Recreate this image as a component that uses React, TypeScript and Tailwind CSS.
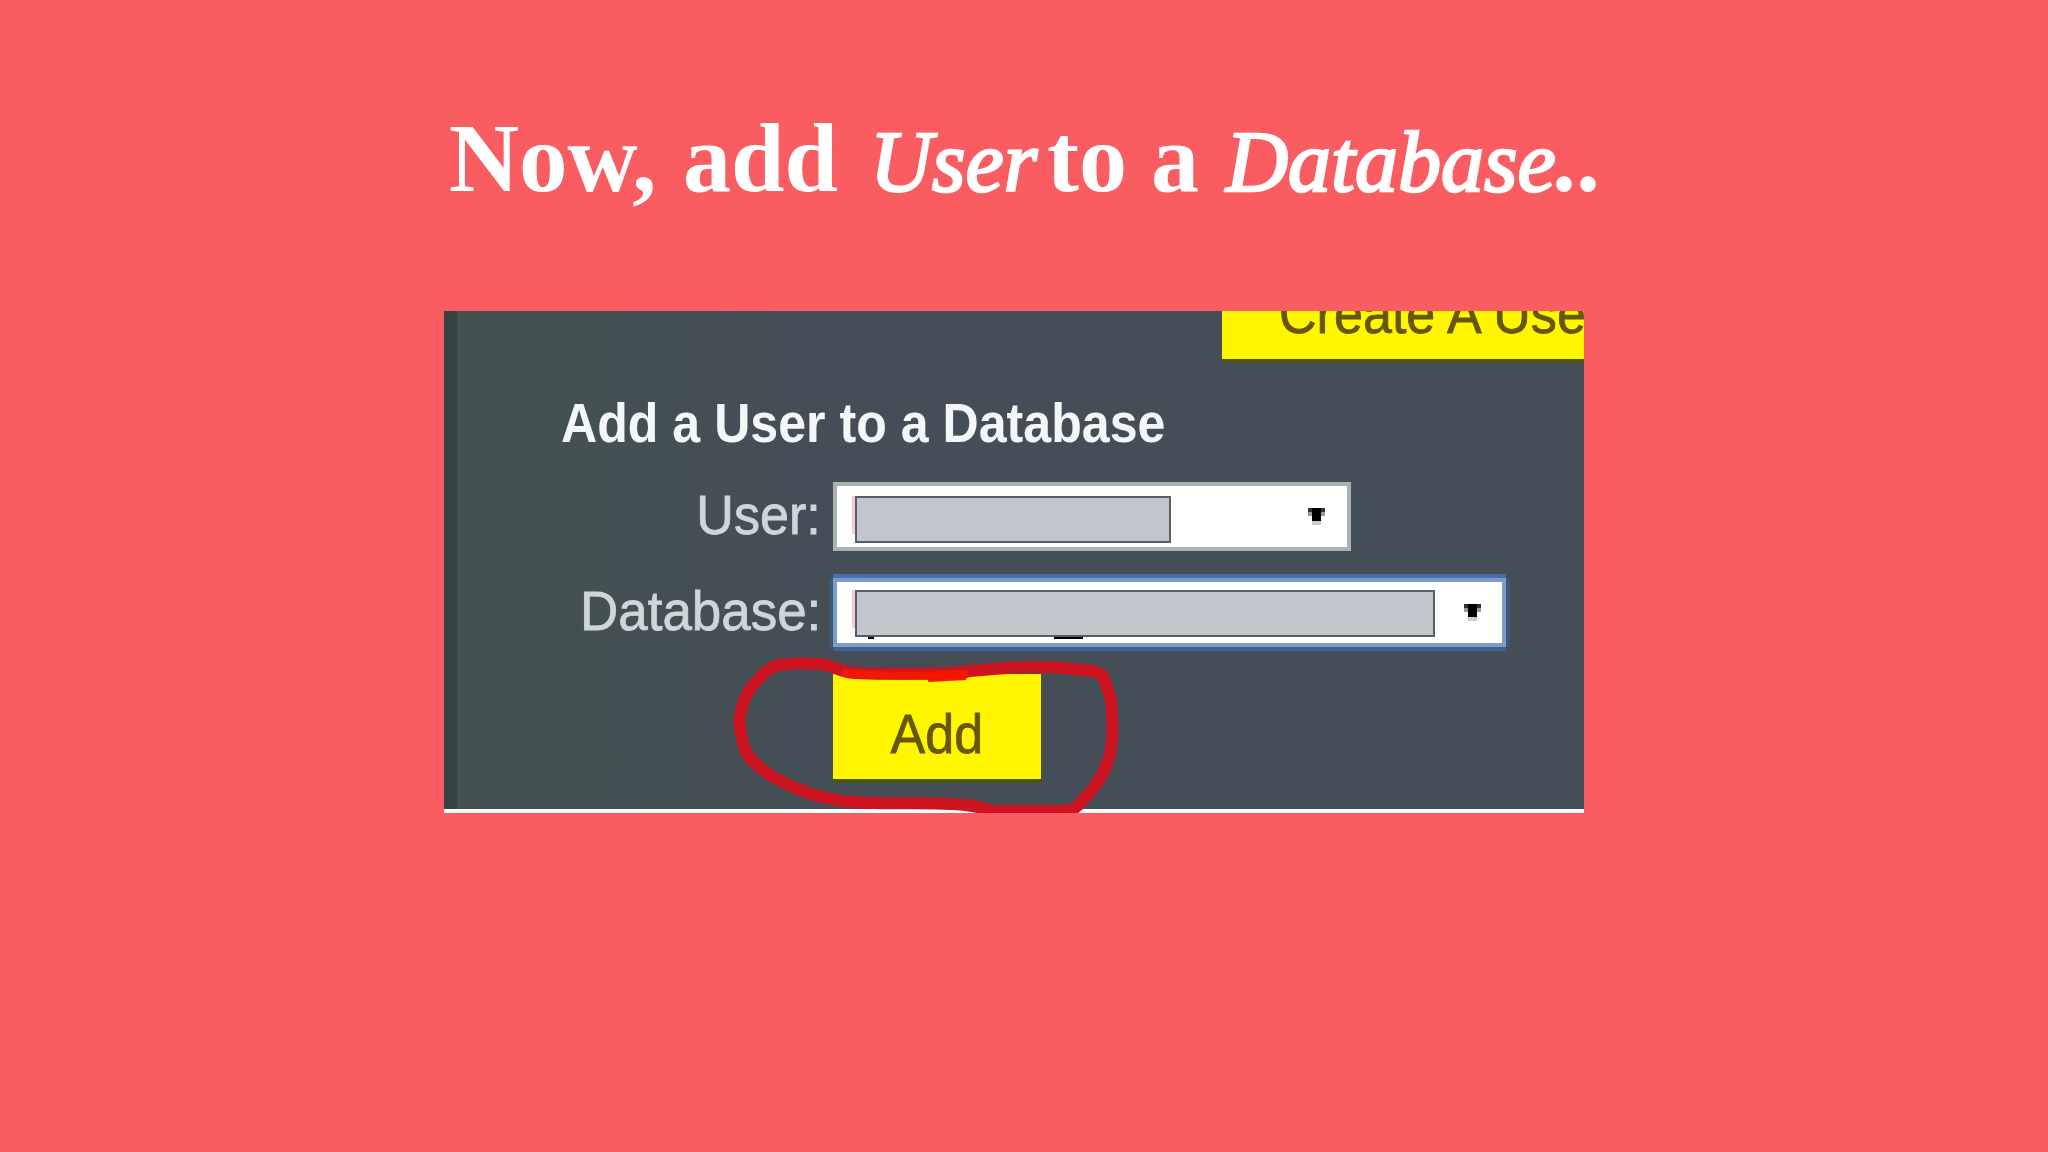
import clsx from 'clsx';

interface FieldProps {
  label: string;
  labelScale: string;
  boxClass: string;
  valueClass: string;
  arrowClass: string;
  focused?: boolean;
}

function SelectArrow({ className }: { className: string }) {
  return (
    <svg viewBox="0 0 17 17" className={clsx('h-[17px] w-[17px] shrink-0', className)} shapeRendering="crispEdges">
      <path d="M0 0h17v4H0z" fill="#333" />
      <path d="M4 0h9v13H4z" fill="#000" />
      <path d="M0 4h4v4H0zM13 4h4v4h-4z" fill="#999" />
      <path d="M4 13h9v4H4z" fill="#ccc" />
    </svg>
  );
}

function Field({ label, labelScale, boxClass, valueClass, arrowClass, focused }: FieldProps) {
  return (
    <div className="flex">
      <div className="flex w-[389px] justify-end pr-[12px] pt-[5px]">
        <span
          className={clsx(
            'origin-right whitespace-nowrap text-[56px] leading-none text-[#cfd5d8] [-webkit-text-stroke:0.8px_#cfd5d8]',
            labelScale,
          )}
        >
          {label}
        </span>
      </div>
      <div
        className={clsx(
          'flex border-4 bg-white',
          focused
            ? 'border-[#7c9cc9] shadow-[0_-4px_0_#4a6ea6,0_4px_0_#41628f,4px_0_0_#3f5873,-4px_0_0_#3f5873]'
            : 'border-[#a9b1b1]',
          boxClass,
        )}
      >
        <div className={clsx('relative ml-[18px] border-2 border-[#565f62] bg-[#c0c6cb]', valueClass)}>
          <span className="absolute -left-[5px] -top-[2px] h-[38px] w-[3px] bg-[#ffc4d8]" />
          {focused && (
            <>
              <span className="absolute left-[11px] top-full mt-[2px] h-[2px] w-[6px] bg-black" />
              <span className="absolute left-[197px] top-full mt-[2px] h-[2px] w-[29px] bg-black" />
            </>
          )}
        </div>
        <SelectArrow className={arrowClass} />
      </div>
    </div>
  );
}

// Hand drawn marker around the Add button
function MarkerCircle() {
  return (
    <svg viewBox="444 311 1140 502" className="absolute inset-0 h-[502px] w-[1140px]" fill="none">
      <path
        d="M778 665C795 663 815 663 827 665C836 668 842 672 855 673C880 674 920 674 950 673C980 670 1010 667 1037 667C1055 667 1070 668 1082 670C1094 671 1102 672 1104 679C1109 692 1112 700 1112 714C1113 730 1113 745 1109 757C1105 773 1095 788 1083 800C1077 808 1072 811 1063 811L995 811C980 807 965 804 950 804C925 802 870 805 843 801C825 798 814 796 803 791C790 786 778 781 767 773C756 765 748 758 745 749C740 735 738 722 741 710C744 698 748 690 756 682C762 674 768 668 778 665Z"
        stroke="#cc1520"
        strokeWidth="12"
        strokeLinejoin="round"
      />
      <path d="M842 673C870 675 900 677 968 674" stroke="#f01800" strokeWidth="8" />
      <path d="M928 677L966 675" stroke="#f81500" strokeWidth="10" />
    </svg>
  );
}

export default function App() {
  return (
    <div className="flex h-[1152px] w-[2048px] flex-col overflow-hidden bg-[#f95d61]">
      <h1 className="flex h-[311px] items-baseline whitespace-nowrap pl-[449px] pt-[109px] font-['Liberation_Serif',serif] text-[98px] font-bold leading-[98px] text-white">
        <span className="w-[234px] origin-left scale-x-[0.99]">Now,</span>
        <span className="w-[187px] origin-left scale-x-[0.98]">add</span>
        <span className="w-[177px] text-[86px] font-normal italic [-webkit-text-stroke:2.5px_white]">User</span>
        <span className="w-[104px] origin-left scale-x-[0.98]">to</span>
        <span className="w-[75px] origin-left scale-x-[0.98]">a</span>
        <span className="w-[326px] text-[86px] font-normal italic [-webkit-text-stroke:2.5px_white]">Database</span>
        <span className="origin-left scale-x-[0.98]">..</span>
      </h1>

      <div className="relative ml-[444px] flex h-[502px] w-[1140px] flex-col overflow-hidden bg-[#454f55] bg-linear-to-r from-[#43524f] to-[#454e56] to-30% font-['Liberation_Sans',sans-serif]">
        <span className="absolute left-0 top-0 h-full w-[13px] bg-[#374443]" />
        <span className="absolute bottom-0 left-0 h-[4px] w-full bg-white" />

        <div className="flex h-[48px] justify-end">
          <div className="w-[362px] bg-[#fff600] pl-[57px] shadow-[0_4px_0_#4c5608]">
            <div className="h-full overflow-hidden">
              <div className="-mt-[25px] origin-left scale-x-[0.93] whitespace-nowrap text-[56px] leading-none text-[#66560e] [-webkit-text-stroke:0.8px_#66560e]">
                Create A User
              </div>
            </div>
          </div>
        </div>

        <h2 className="ml-[117px] mt-[36px] origin-left scale-x-[0.895] whitespace-nowrap text-[56px] font-bold leading-none text-[#f4f7f8]">
          Add a User to a Database
        </h2>

        <div className="mt-[31px] flex flex-col gap-[27px]">
          <Field
            label="User:"
            labelScale="scale-x-[0.93]"
            boxClass="h-[69px] w-[518px]"
            valueClass="mt-[10px] h-[47px] w-[316px]"
            arrowClass="ml-[137px] mt-[22px]"
          />
          <Field
            label="Database:"
            labelScale="scale-x-[0.945]"
            boxClass="h-[69px] w-[673px]"
            valueClass="mt-[8px] h-[47px] w-[580px]"
            arrowClass="ml-[29px] mt-[22px]"
            focused
          />
        </div>

        <button className="ml-[389px] mt-[27px] flex h-[105px] w-[208px] shrink-0 justify-center bg-[#fff600] pt-[32px] text-[56px] leading-none text-[#66560e] shadow-[0_4px_0_#4c5608]">
          <span className="scale-x-[0.93] [-webkit-text-stroke:0.8px_#66560e]">Add</span>
        </button>

        <MarkerCircle />
      </div>
    </div>
  );
}
